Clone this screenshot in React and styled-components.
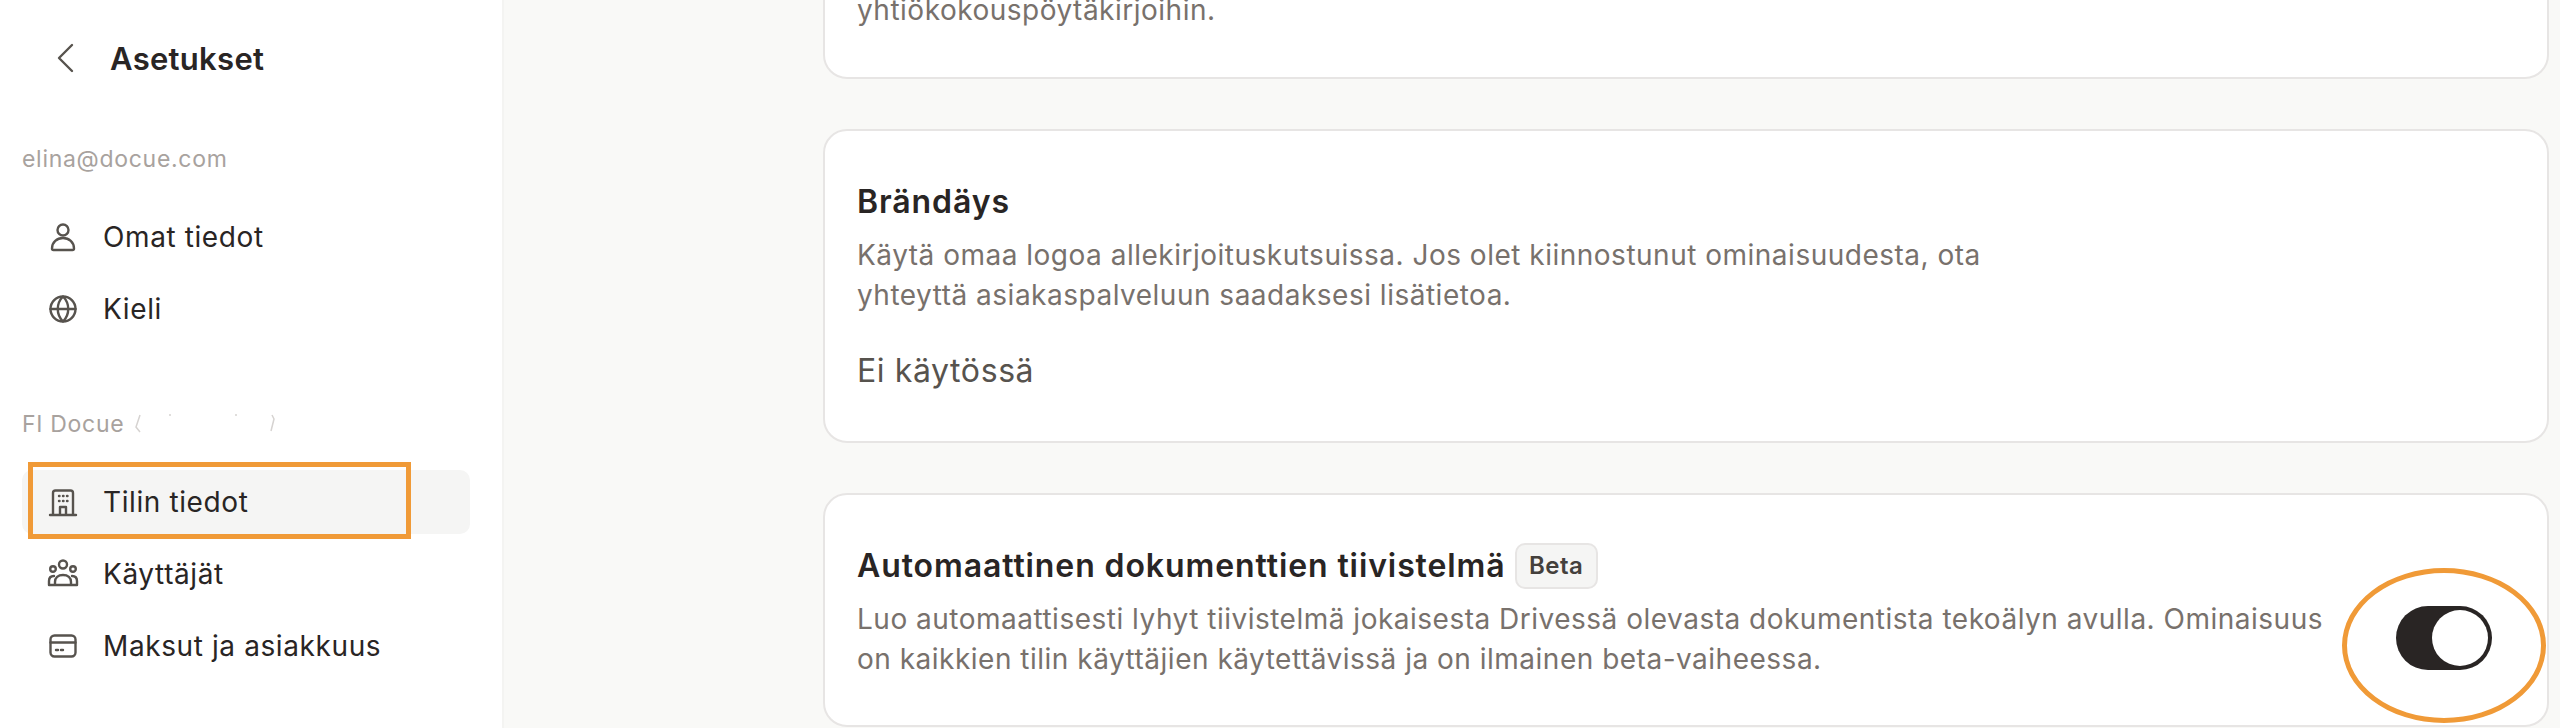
import React from 'react'
import styled, { createGlobalStyle } from 'styled-components'

const GlobalStyle = createGlobalStyle`
  html, body { margin: 0; padding: 0; }
  body { font-family: "Inter", "Noto Sans", sans-serif; background: #f9f9f7; color: #292524; }
`

const Page = styled.div`
  display: flex;
  width: 2560px;
  height: 728px;
  overflow: hidden;
  position: relative;
`

const Sidebar = styled.aside`
  width: 448px;
  flex-shrink: 0;
  background: #fff;
  border-right: 2px solid #f4f4f2;
  padding: 0 32px 0 22px;
`

const Header = styled.div`
  display: flex;
  align-items: center;
  height: 116px;
  padding-left: 28px;
  gap: 28px;
`

const Title = styled.h1`
  margin: 0;
  font-size: 31px;
  font-weight: 600;
  letter-spacing: 0.3px;
  color: #292524;
`

const SectionLabel = styled.div`
  font-size: 23px;
  line-height: 30px;
  letter-spacing: 0.7px;
  color: #a8a29e;
  display: flex;
  align-items: center;
  gap: 8px;
  margin-top: ${p => p.$top}px;
  margin-bottom: 31px;
`

const NavList = styled.nav`
  display: flex;
  flex-direction: column;
  gap: 8px;
`

const NavItem = styled.div`
  display: flex;
  align-items: center;
  height: 64px;
  padding-left: 25px;
  gap: 24px;
  border-radius: 10px;
  font-size: 28px;
  letter-spacing: 0.6px;
  color: #292524;
  background: ${p => (p.$active ? '#f5f5f4' : 'transparent')};
`

const IconSlot = styled.svg`
  width: 32px;
  height: 32px;
  flex-shrink: 0;
  fill: none;
  stroke: #57534e;
  stroke-width: 2.4;
  stroke-linecap: round;
  stroke-linejoin: round;
`

const Main = styled.main`
  flex: 1;
  display: flex;
  flex-direction: column;
  justify-content: flex-end;
  gap: 50px;
  padding: 0 11px 0 319px;
  height: 728px;
  box-sizing: border-box;
  overflow: hidden;
`

const Card = styled.section`
  flex-shrink: 0;
  position: relative;
  background: #fff;
  border: 2px solid #e7e5e4;
  border-radius: 24px;
  padding: ${p => p.$pad};
  margin-bottom: ${p => p.$mb || 0}px;
`

const CardTitle = styled.h2`
  display: flex;
  align-items: center;
  gap: 9px;
  height: 44px;
  margin: 0 0 11px;
  font-size: 32px;
  line-height: 44px;
  font-weight: 600;
  letter-spacing: 0.9px;
  color: #292524;
`

const Badge = styled.span`
  display: inline-flex;
  align-items: center;
  justify-content: center;
  width: 83px;
  height: 46px;
  box-sizing: border-box;
  background: #f5f5f4;
  border: 2px solid #e7e5e4;
  border-radius: 10px;
  font-size: 24px;
  font-weight: 600;
  letter-spacing: 0.5px;
  color: #44403c;
`

const CardText = styled.p`
  margin: 0;
  font-size: 28px;
  line-height: 40px;
  color: #78716c;
  letter-spacing: 0.5px;
  white-space: pre-line;
`

const Status = styled.div`
  margin-top: 34px;
  font-size: 32px;
  line-height: 44px;
  letter-spacing: 0.6px;
  color: #57534e;
`

const Toggle = styled.div`
  position: absolute;
  right: 55px;
  top: 111px;
  width: 96px;
  height: 64px;
  border-radius: 32px;
  background: #292524;
  &::after {
    content: '';
    position: absolute;
    top: 4px;
    right: 4px;
    width: 56px;
    height: 56px;
    border-radius: 50%;
    background: #fff;
  }
`

const HighlightBox = styled.div`
  position: absolute;
  left: 28px;
  top: 462px;
  width: 383px;
  height: 77px;
  box-sizing: border-box;
  border: 5px solid #f09a37;
`

const HighlightRing = styled.div`
  position: absolute;
  left: 2342px;
  top: 568px;
  width: 204px;
  height: 155px;
  box-sizing: border-box;
  border: 5px solid #f09a37;
  border-radius: 50%;
`

const Specks = styled.svg`
  width: 146px;
  height: 26px;
  fill: none;
  stroke: #d6d3d1;
  stroke-width: 1.5;
`

const BackIcon = () => (
  <IconSlot viewBox="0 0 32 32">
    <path d="M22 3 L9 16 L22 29" />
  </IconSlot>
)

const UserIcon = () => (
  <IconSlot viewBox="0 0 32 32">
    <circle cx="16" cy="9" r="5.500" />
    <path d="M6.500 29h19c1 0 1.500-.5 1.500-1.500C27 21 22 17 16 17S5 21 5 27.500C5 28.500 5.500 29 6.500 29z" />
  </IconSlot>
)

const GlobeIcon = () => (
  <IconSlot viewBox="0 0 32 32">
    <circle cx="16" cy="16" r="12.500" />
    <path d="M3.500 16h25M16 3.500c-7 7-7 18 0 25M16 3.500c7 7 7 18 0 25" />
  </IconSlot>
)

const BuildingIcon = () => (
  <IconSlot viewBox="0 0 32 32">
    <path d="M6 28V7c0-1.500 1-2.500 2.500-2.500h15c1.500 0 2.500 1 2.500 2.500v21" />
    <path d="M3 29h26M13 28v-7h6v7" />
    <path d="M12 10h.5M16 10h.5M20 10h.5M12 15h.5M16 15h.5M20 15h.5" strokeWidth="2.4" />
  </IconSlot>
)

const UsersIcon = () => (
  <IconSlot viewBox="0 0 32 32">
    <circle cx="16" cy="6.500" r="4" />
    <circle cx="6" cy="11" r="2.800" />
    <circle cx="26" cy="11" r="2.800" />
    <path d="M2 27v-4c0-3 2-5 5-5M30 27v-4c0-3-2-5-5-5M2 27h28M8 27v-3c0-4 3-7 8-7s8 3 8 7v3" />
  </IconSlot>
)

const CardIcon = () => (
  <IconSlot viewBox="0 0 32 32">
    <rect x="3.500" y="5.500" width="25" height="21" rx="4" />
    <path d="M3.500 12.500h25M9 20h2M14 20h2" />
  </IconSlot>
)

const accountItems = [
  { label: 'Omat tiedot', Icon: UserIcon },
  { label: 'Kieli', Icon: GlobeIcon },
]

const companyItems = [
  { label: 'Tilin tiedot', Icon: BuildingIcon, active: true },
  { label: 'Käyttäjät', Icon: UsersIcon },
  { label: 'Maksut ja asiakkuus', Icon: CardIcon },
]

function NavGroup({ items }) {
  return (
    <NavList>
      {items.map(({ label, Icon, active }) => (
        <NavItem key={label} $active={active}>
          <Icon />
          {label}
        </NavItem>
      ))}
    </NavList>
  )
}

export default function App() {
  return (
    <Page>
      <GlobalStyle />
      <Sidebar>
        <Header>
          <BackIcon />
          <Title>Asetukset</Title>
        </Header>
        <SectionLabel $top={28}>elina@docue.com</SectionLabel>
        <NavGroup items={accountItems} />
        <SectionLabel $top={68}>
          FI Docue
          <Specks viewBox="0 0 146 26">
            <path d="M8 4 4 16l4 5M38 3v2M104 3v2M140 4l2 4-3 12" />
          </Specks>
        </SectionLabel>
        <NavGroup items={companyItems} />
      </Sidebar>
      <Main>
        <Card $pad="600px 32px 47px">
          <CardText>yhtiökokouspöytäkirjoihin.</CardText>
        </Card>
        <Card $pad="49px 32px 48px">
          <CardTitle>Brändäys</CardTitle>
          <CardText>
            {'Käytä omaa logoa allekirjoituskutsuissa. Jos olet kiinnostunut ominaisuudesta, ota\nyhteyttä asiakaspalveluun saadaksesi lisätietoa.'}
          </CardText>
          <Status>Ei käytössä</Status>
        </Card>
        <Card $pad="49px 32px 46px" $mb={1}>
          <CardTitle>
            Automaattinen dokumenttien tiivistelmä <Badge>Beta</Badge>
          </CardTitle>
          <CardText>
            {'Luo automaattisesti lyhyt tiivistelmä jokaisesta Drivessä olevasta dokumentista tekoälyn avulla. Ominaisuus\non kaikkien tilin käyttäjien käytettävissä ja on ilmainen beta-vaiheessa.'}
          </CardText>
          <Toggle />
        </Card>
      </Main>
      <HighlightBox />
      <HighlightRing />
    </Page>
  )
}
